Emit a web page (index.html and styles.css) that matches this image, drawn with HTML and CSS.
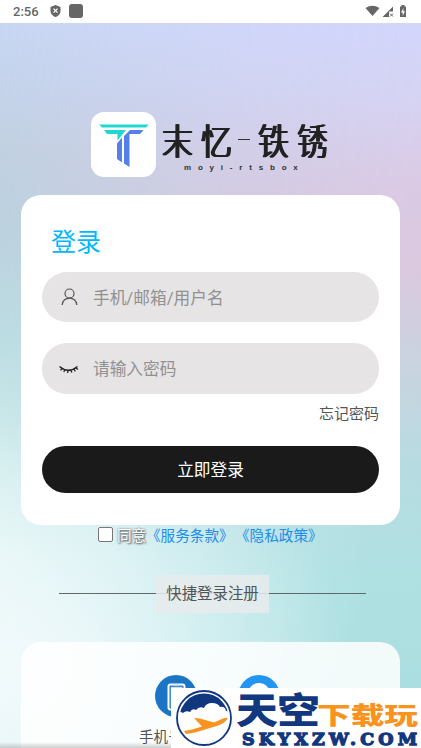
FILE: index.html
```
<!DOCTYPE html>
<html lang="zh-CN">
<head>
<meta charset="utf-8">
<title>登录</title>
<link rel="stylesheet" href="styles.css">
</head>
<body>
<div class="screen">
  <header class="status">
    <span class="time">2:56</span>
    <svg class="shield" width="11" height="12" viewBox="0 0 11 12"><path fill="#666" d="M5.500 0 10.500 2v4c0 3-2.500 5.200-5 6C3 11.200.5 9 .5 6V2z"/><path stroke="#fff" stroke-width="1.300" d="m3.500 3.600 4 4m0-4-4 4"/></svg>
    <span class="app"></span>
    <svg class="signals" width="44" height="14" viewBox="0 0 44 14"><path fill="#666" d="M1.500 4Q8.500-.5 15.500 4l-7 8zM18.500 13 29 2.500v5h-4V13z"/><path stroke="#666" d="m26 9.500 3 3m0-3-3 3"/><path fill="#666" d="M36 2.500h1.500V1h3v1.500H42V13h-6z"/><path fill="#fff" d="M39.500 4 37 8.500h1.700V12L41 7.200h-1.700z"/></svg>
  </header>
  <main>
    <div class="brand">
      <div class="logo">
        <svg width="65" height="65" viewBox="0 0 65 65"><path fill="#20d8cf" d="M8 12.500h49.500l-2.500 3H11zM13 18h22L26.500 28.500V22H16z"/><path fill="#557fe9" d="M39 18h13.500l-3.500 4H38.500v33l-5.500-3.500V24zM26 31.500l5-6v25L26 47z"/></svg>
      </div>
      <div class="wordmark">
        <div class="name"><span>末</span><span>忆</span><i></i><span>铁</span><span>锈</span></div>
        <div class="sub">moyi-rtsbox</div>
      </div>
    </div>
    <section class="card">
      <h1>登录</h1>
      <div class="field">
        <svg width="20" height="20" viewBox="0 0 20 20"><circle cx="10.500" cy="6.500" r="4.500"/><path d="M3.200 18C3.500 8.700 17.500 8.700 17.800 18"/></svg>
        <span>手机/邮箱/用户名</span>
      </div>
      <div class="field second">
        <svg class="eye" width="20" height="20" viewBox="0 0 20 20"><path d="M.5 8.500q9 7.500 18 0M3.500 10.200 1.500 12.300m4.500-1-1.200 2.700M9 12.300 8.700 15m3.300-3 .8 2.500m2-3.500 1.500 2.300m.5-3.500 2 1.800"/></svg>
        <span>请输入密码</span>
      </div>
      <div class="forgot">忘记密码</div>
      <button class="submit">立即登录</button>
    </section>
    <div class="agree"><span class="box"></span><span class="yes">同意</span><span class="link">《服务条款》</span><span class="link">《隐私政策》</span></div>
    <div class="divider"><span>快捷登录注册</span></div>
    <section class="quick">
      <div class="way">
        <svg width="42" height="42" viewBox="0 0 42 42"><circle cx="21" cy="21" r="21" fill="#1c75c4"/><rect x="13.500" y="9.500" width="16" height="25" rx="2" fill="none" stroke="#fff" stroke-width="2"/><path stroke="#c9dced" stroke-width="1.500" d="M19 10h5M16.500 32V12.500h11"/></svg>
        <span>手机号登录</span>
      </div>
      <div class="way">
        <svg width="42" height="42" viewBox="0 0 42 42"><circle cx="21" cy="21" r="21" fill="#2496f2"/><circle cx="21" cy="19" r="11" fill="#fff"/></svg>
      </div>
    </section>
  </main>
  <div class="shade"></div>
  <svg class="watermark" width="250" height="60" viewBox="0 0 250 60">
    <path fill="#fff" d="M0 0h250v60H0z"/>
    <clipPath id="disc"><circle cx="33" cy="30" r="24.500"/></clipPath>
    <circle cx="33" cy="30" r="27" fill="none" stroke="#11377e" stroke-width="1.800"/>
    <path clip-path="url(#disc)" fill="#11377e" d="M6 0h55v27q-2-4-6-4-1-5-6-4-2-4-8-4-6 0-8 5-5-2-8 2-4-2-6 2-4-2-7 1-3-2-6 0z"/>
    <path fill="#f7931e" d="m13 43 8-1.500 10-3-8-8.500 6 .5 14 4 9-4q6-2 4 1-4 5-12 7L24 44.500 15 46z"/>
    <g class="sky"><text x="65" y="36" textLength="42" lengthAdjust="spacingAndGlyphs">天</text><text x="106" y="36" textLength="43" lengthAdjust="spacingAndGlyphs">空</text></g>
    <text class="play" x="146" y="36" textLength="101" lengthAdjust="spacingAndGlyphs">下载玩</text>
    <text class="url" x="71" y="57.300" textLength="175">SKYXZW.COM</text>
  </svg>
</div>
</body>
</html>
```
FILE: styles.css
```
* { box-sizing: border-box; }
body { margin: 0; font-family: Roboto, "Noto Sans CJK SC", sans-serif; }
.screen {
  position: relative; width: 421px; height: 748px; overflow: hidden; isolation: isolate;
  background: linear-gradient(180deg, #c8d7f4 3%, #c0d1e1 20%, #b9d3df 31%, #b9e0e4 46%, #d3eeed 60%, #edf9f7 74%, #f7fbfc 100%);
}
.screen::before {
  content: ""; position: absolute; inset: 0; z-index: -1;
  background: linear-gradient(180deg, #d3d6fc 3%, #d5d3f4 12%, #dbcae4 25%, #dac8df 36%, #cbd3e0 48%, #b7dce2 62%, #afe1e3 78%, #a9dcde 100%);
  -webkit-mask-image: linear-gradient(97deg, transparent 0%, rgba(0,0,0,.72) 48%, #000 85%);
  mask-image: linear-gradient(97deg, transparent 0%, rgba(0,0,0,.72) 48%, #000 85%);
}
.screen::after {
  content: ""; position: absolute; inset: 0; z-index: -1;
  background: radial-gradient(ellipse 320px 250px at 30px 670px, rgba(247,252,254,.8), rgba(240,250,253,.5) 50%, rgba(235,248,252,0));
}
.status { height: 22.500px; background: #fff; display: flex; align-items: center; padding: 0 13px; }
.time { font-size: 13px; line-height: 23px; color: #666; font-weight: 500; width: 37px; }
.app { width: 14px; height: 14px; border-radius: 3px; background: #666; margin-left: 8px; }
.signals { margin-left: auto; }
main { padding: 89px 21px 0; }
.brand { display: flex; height: 66px; margin-left: 70px; }
.logo { width: 65px; height: 65px; border-radius: 13px; background: #fff; }
.logo svg { display: block; }
.wordmark { margin-left: 5px; padding-top: 9px; width: 174px; }
.name { height: 36px; display: flex; align-items: center; color: #222; font: 300 30.500px/36px "Noto Sans CJK SC", sans-serif; }
.name span { width: 39px; transform: scaleY(1.200); text-shadow: .6px 0 #222, 1.200px 0 #222, 1.800px 0 #222, 2.400px 0 #222; }
.name i { width: 12px; height: 1px; margin: 2px 7px 0 -1px; background: #333; }
.sub { margin: 5px 0 0 23px; font: 700 8px/12px "Liberation Sans", sans-serif; letter-spacing: 6.800px; color: #333; white-space: nowrap; }
.card { margin-top: 17px; height: 330px; border-radius: 20px; background: #fff; padding: 29px 21px 0; }
h1 { margin: 0 0 11px 9px; font-size: 25px; line-height: 37px; font-weight: 400; color: #00b8ff; }
.field { height: 50px; border-radius: 25px; background: #e6e4e5; display: flex; align-items: center; padding-left: 17px; font-size: 16.700px; color: #919191; }
.field svg { margin-right: 14px; fill: none; stroke: #555; stroke-width: 1.200; }
.field .eye { stroke: #222; stroke-width: 1.300; }
.second { margin-top: 21px; height: 51px; }
.forgot { text-align: right; font-size: 15px; line-height: 22px; margin-top: 9px; color: #555; }
.submit { display: block; width: 100%; height: 46.500px; margin-top: 21.500px; border: 0; border-radius: 24px; background: #1a1a1a; color: #fff; font: 16.700px/46px "Noto Sans CJK SC", sans-serif; padding: 0; }
.agree { height: 20px; display: flex; align-items: center; margin-left: 77px; font-size: 14.600px; white-space: nowrap; }
.box { width: 15px; height: 15px; border: 1px solid #777; border-radius: 2px; background: #fff; margin-right: 4px; }
.yes { color: #fff; text-shadow: 1px 1px 2px #555, 0 0 2px #666; width: 29px; }
.link { color: #228de8; width: 89px; }
.divider { height: 38px; width: 307px; margin: 30px 0 0 38px; display: flex; justify-content: center; background: linear-gradient(#626769, #626769) 0 18px / 100% 1px no-repeat; }
.divider span { width: 113px; text-align: center; background: rgba(232,235,236,.85); font-size: 15.400px; line-height: 39px; height: 38px; color: #505557; }
.quick { margin-top: 29px; height: 150px; border-radius: 20px; background: rgba(255,255,255,.84); padding: 33px 0 0 113px; display: flex; }
.way { width: 83px; display: flex; flex-direction: column; align-items: center; color: #555; font-size: 14.600px; line-height: 22px; white-space: nowrap; }
.way span { margin-top: 9px; }
.shade { position: absolute; left: 0; bottom: 0; width: 421px; height: 6px; background: linear-gradient(transparent, rgba(70,70,70,.25)); }
.watermark { position: absolute; right: 0; bottom: 0; overflow: visible; }
.sky { font: 900 36px "Noto Sans CJK SC", sans-serif; fill: #11377e; }
.play { font: 900 24px "Noto Sans CJK SC", sans-serif; fill: #f7931e; }
.url { font: 700 17.500px "DejaVu Serif", serif; fill: #11377e; stroke: #11377e; stroke-width: 1.300; }
```
